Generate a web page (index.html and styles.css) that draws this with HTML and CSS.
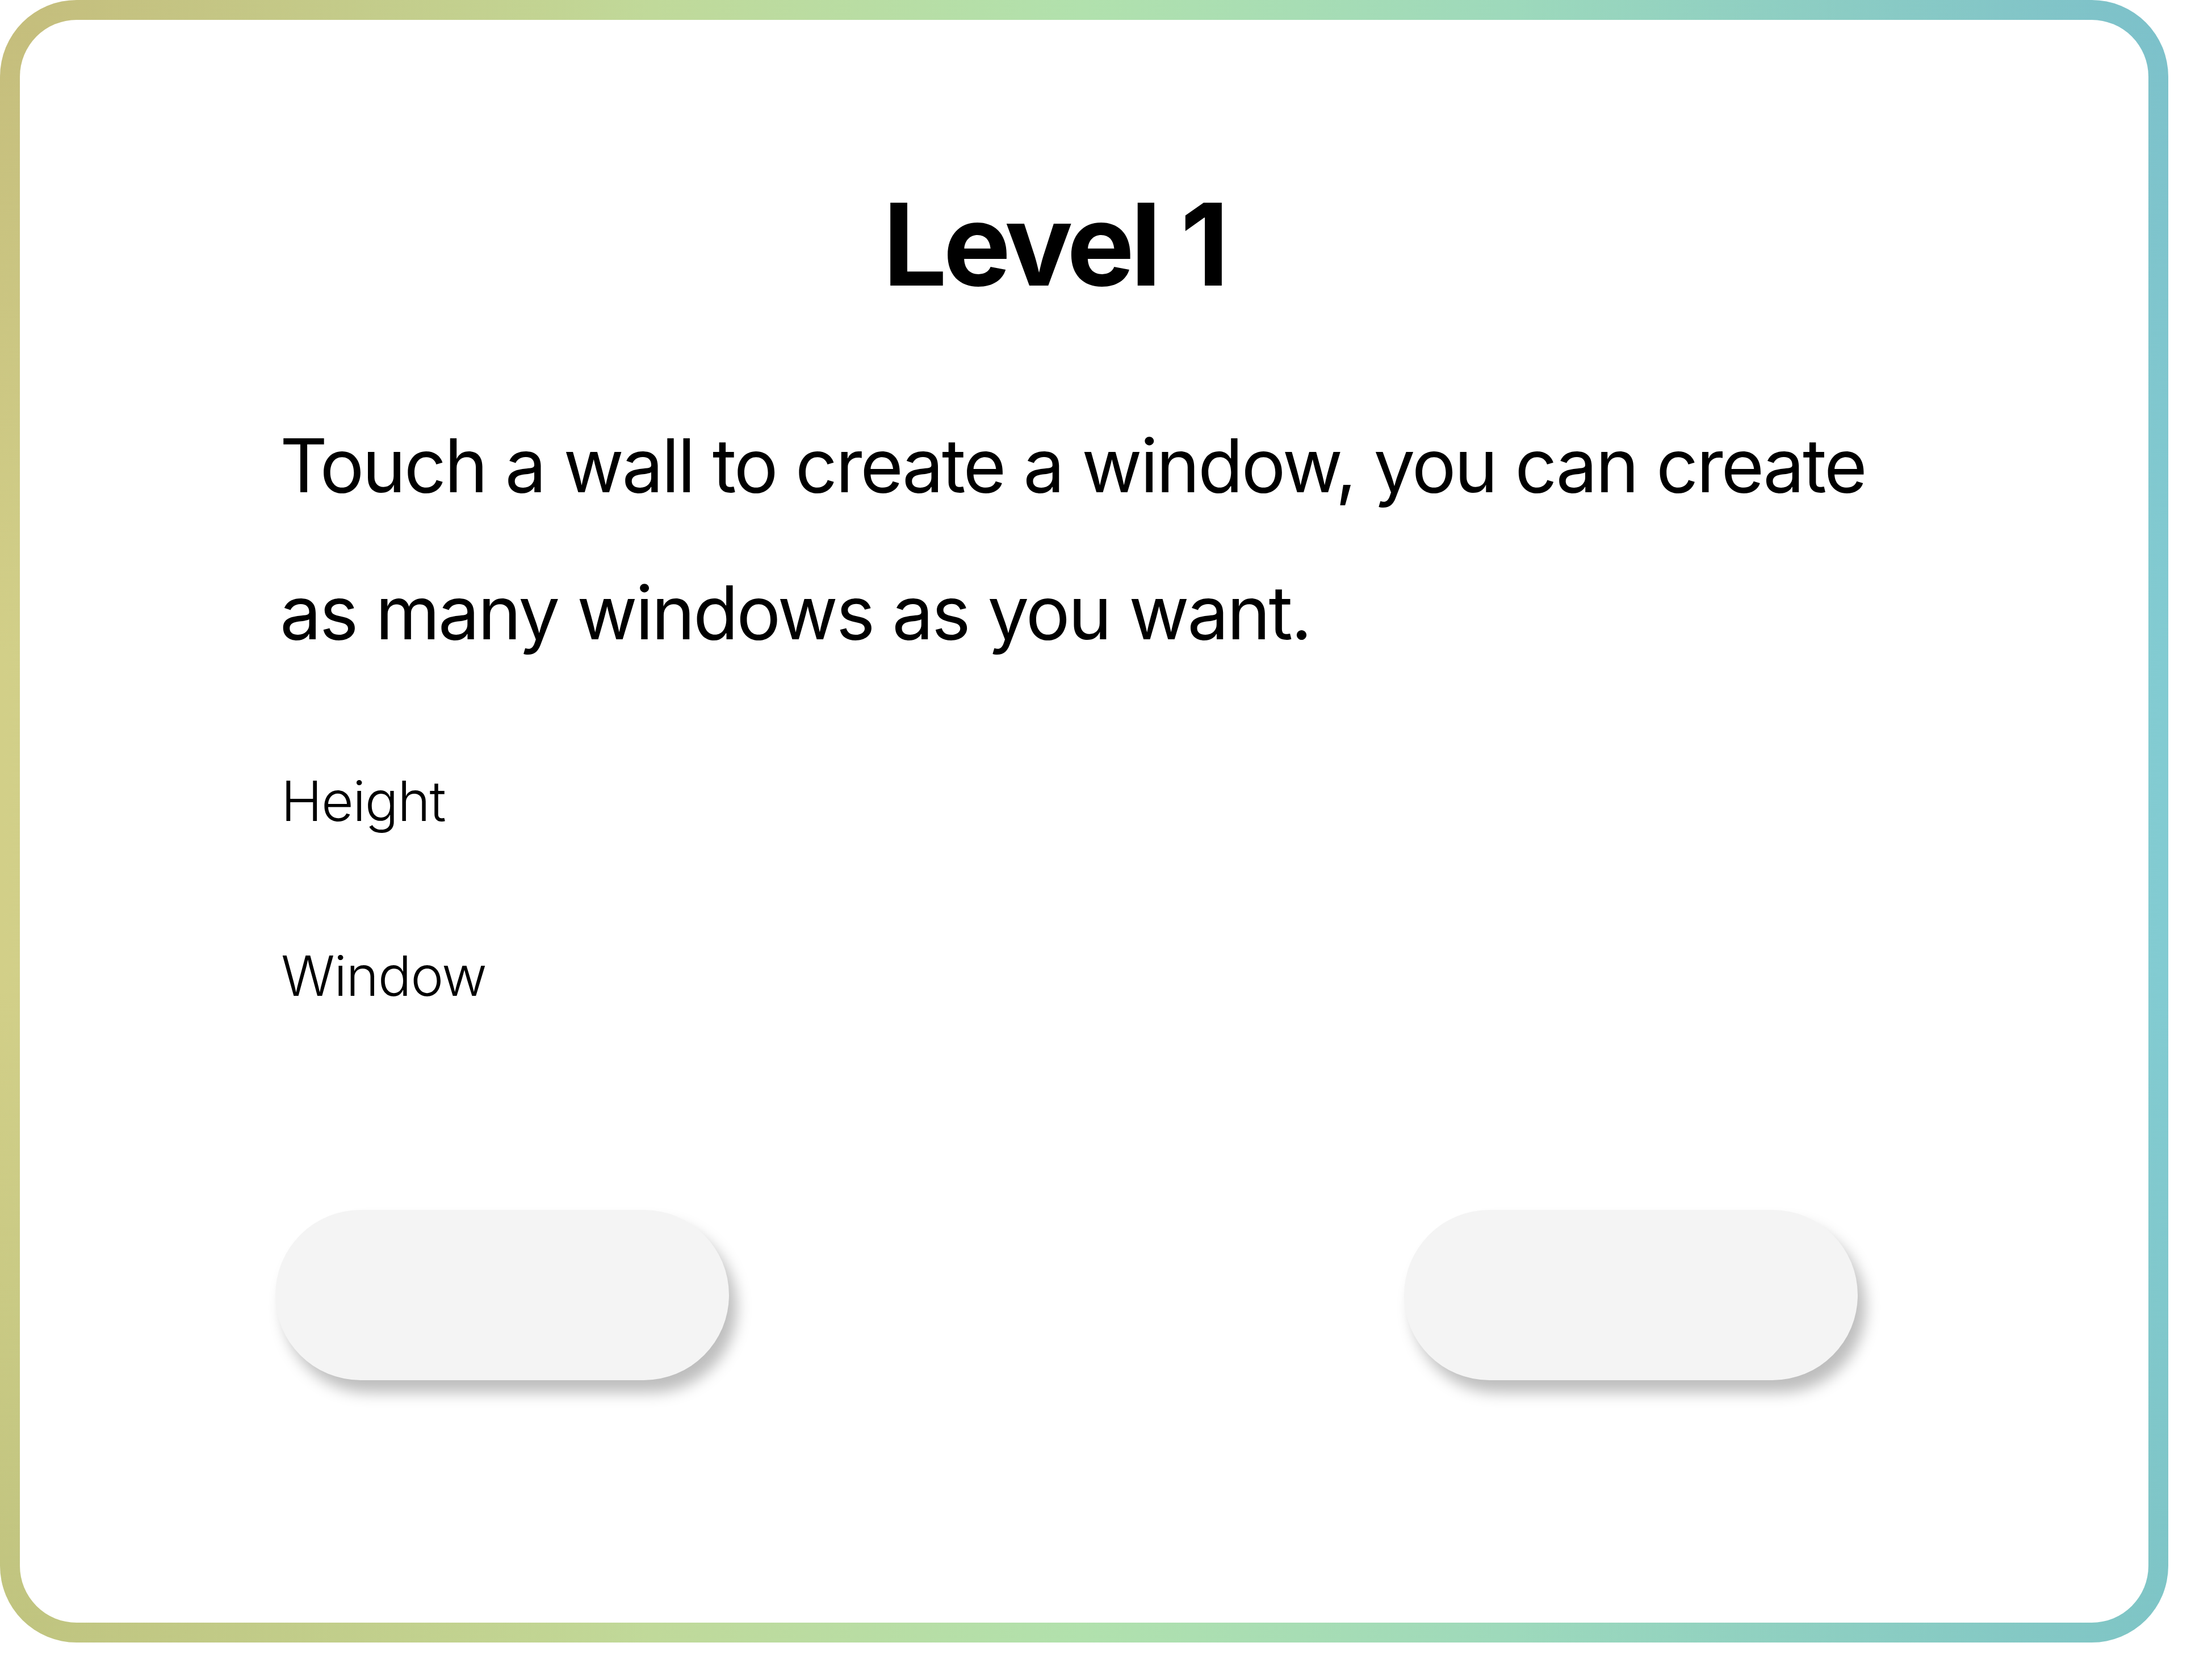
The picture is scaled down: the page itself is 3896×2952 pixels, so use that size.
FILE: index.html
```html
<!DOCTYPE html>
<html lang="en">
<head>
<meta charset="utf-8">
<title>Level 1</title>
<link rel="stylesheet" href="styles.css">
</head>
<body>
<main class="card">
  <h1 class="title">Level 1</h1>
  <p class="intro">Touch a wall to create a window, you can create as many windows as you want.</p>
  <div class="label label-height">Height</div>
  <div class="label label-window">Window</div>
  <div class="actions">
    <button class="pill" type="button" aria-label="Back"></button>
    <button class="pill" type="button" aria-label="Next"></button>
  </div>
</main>
</body>
</html>
```

FILE: styles.css
```css
* { box-sizing: border-box; }

html, body {
  margin: 0;
  padding: 0;
  background: #ffffff;
}

body {
  width: 3896px;
  height: 2952px;
  font-family: Inter, "Noto Sans", sans-serif;
  color: #000000;
}

.card {
  width: 3819px;
  height: 2893px;
  border: 35px solid transparent;
  border-radius: 135px;
  background:
    linear-gradient(#ffffff, #ffffff) padding-box,
    radial-gradient(ellipse 30% 40% at 0% 0%, rgba(150, 125, 80, 0.22), rgba(150, 125, 80, 0)) border-box,
    radial-gradient(ellipse 30% 40% at 100% 0%, rgba(100, 150, 170, 0.2), rgba(100, 150, 170, 0)) border-box,
    radial-gradient(ellipse 30% 40% at 0% 100%, rgba(120, 150, 90, 0.2), rgba(120, 150, 90, 0)) border-box,
    radial-gradient(ellipse 30% 40% at 100% 100%, rgba(110, 170, 150, 0.2), rgba(110, 170, 150, 0)) border-box,
    linear-gradient(to right, #d2cf88 0%, #c4d795 25%, #b1e1ad 50%, #9bd8bd 72%, #82cbd2 100%) border-box;
  padding: 295px 512px 428px 450px;
  display: flex;
  flex-direction: column;
}

.title {
  margin: 0 44px 0 0;
  font-size: 200px;
  line-height: 200px;
  font-weight: 700;
  letter-spacing: -7px;
  text-align: center;
}

.intro {
  margin: 160px -80px 0 0;
  font-size: 130px;
  line-height: 259px;
  font-weight: 400;
  letter-spacing: -3.3px;
  padding-left: 8px;
}

.label {
  font-size: 98px;
  line-height: 118px;
  font-weight: 300;
  letter-spacing: -1.5px;
  padding-left: 10px;
}

.label-height { margin-top: 144px; }
.label-window { margin-top: 190px; }

.actions {
  margin-top: 353px;
  display: flex;
  justify-content: space-between;
}

.pill {
  width: 799px;
  height: 300px;
  border: none;
  border-radius: 150px;
  background: #f4f4f4;
  box-shadow: 14px 22px 26px rgba(0, 0, 0, 0.26);
  padding: 0;
}
```
